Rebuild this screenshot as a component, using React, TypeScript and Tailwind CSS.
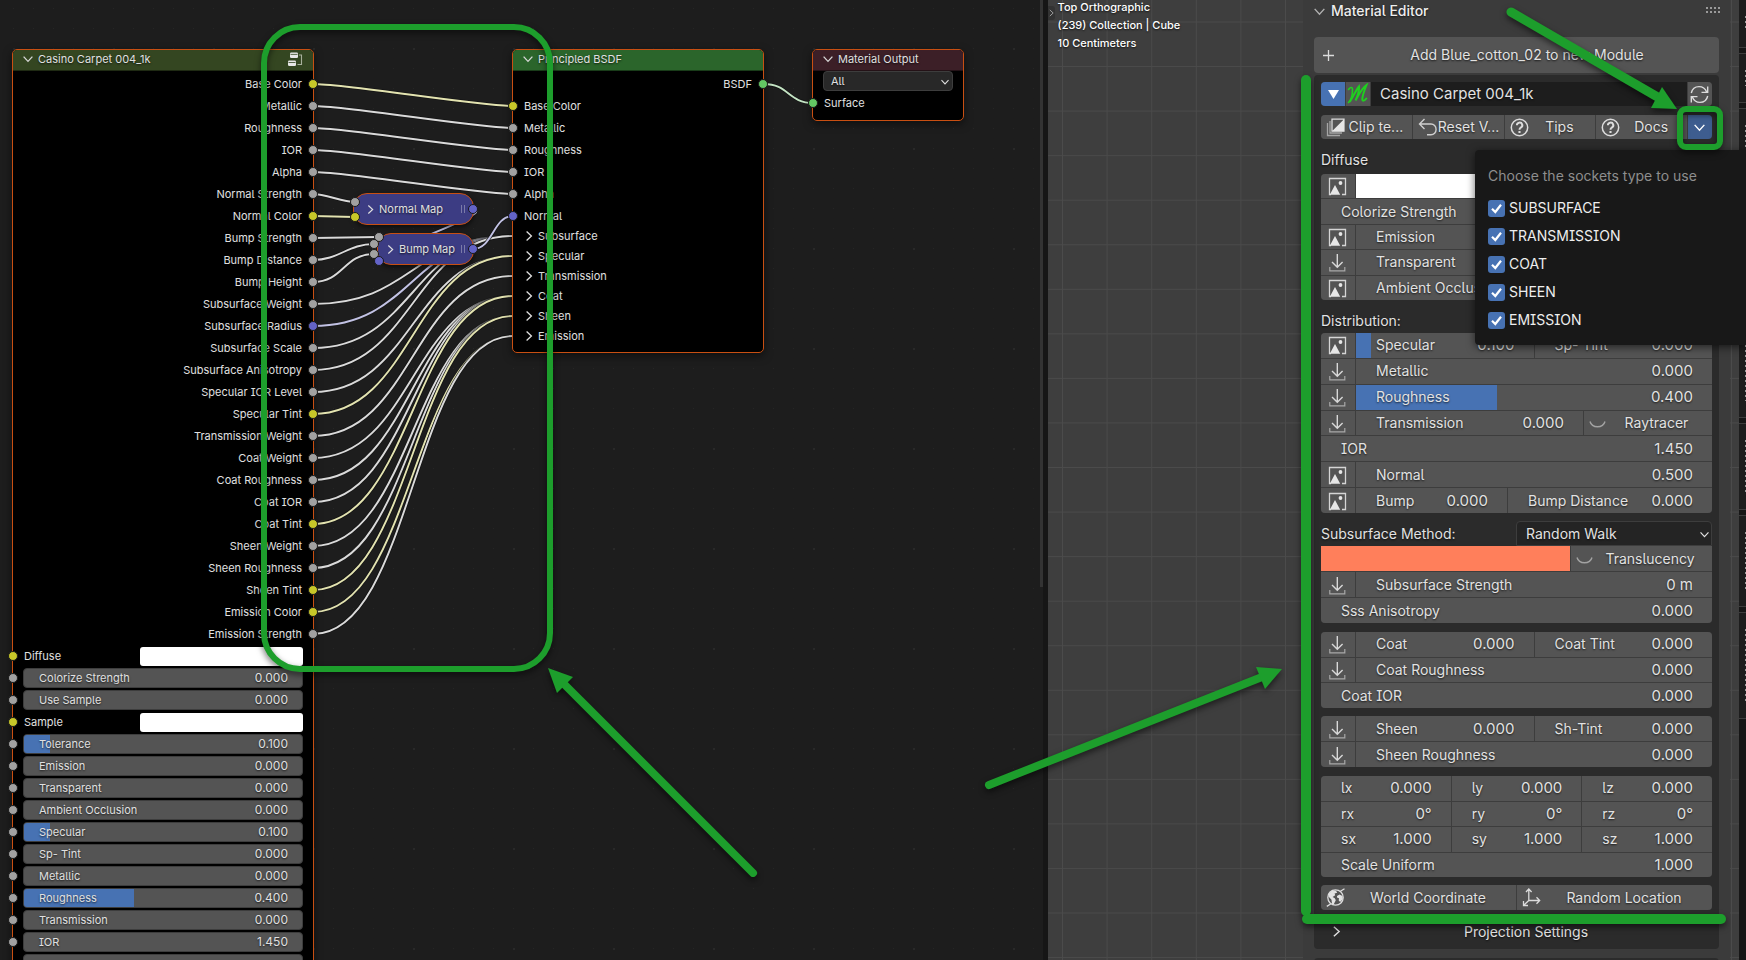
import React, { useId } from "react";

const SOCKET = {
  yellow: "bg-[#c7c729]",
  gray: "bg-[#a1a1a1]",
  blue: "bg-[#6363c7]",
  green: "bg-[#63c763]",
};
type SocketColor = keyof typeof SOCKET;

const LINK = { yellow: "#e3e3b0", gray: "#dadada", blue: "#c2c2e4", green: "#c4e4c4" };

const SHADOW = "[text-shadow:0_1px_2px_rgba(0,0,0,0.7)]";

/* ---------- data ---------- */

type Output = { name: string; color: SocketColor };

const outputs: Output[] = [
  { name: "Base Color", color: "yellow" },
  { name: "Metallic", color: "gray" },
  { name: "Roughness", color: "gray" },
  { name: "IOR", color: "gray" },
  { name: "Alpha", color: "gray" },
  { name: "Normal Strength", color: "gray" },
  { name: "Normal Color", color: "yellow" },
  { name: "Bump Strength", color: "gray" },
  { name: "Bump Distance", color: "gray" },
  { name: "Bump Height", color: "gray" },
  { name: "Subsurface Weight", color: "gray" },
  { name: "Subsurface Radius", color: "blue" },
  { name: "Subsurface Scale", color: "gray" },
  { name: "Subsurface Anisotropy", color: "gray" },
  { name: "Specular IOR Level", color: "gray" },
  { name: "Specular Tint", color: "yellow" },
  { name: "Transmission Weight", color: "gray" },
  { name: "Coat Weight", color: "gray" },
  { name: "Coat Roughness", color: "gray" },
  { name: "Coat IOR", color: "gray" },
  { name: "Coat Tint", color: "yellow" },
  { name: "Sheen Weight", color: "gray" },
  { name: "Sheen Roughness", color: "gray" },
  { name: "Sheen Tint", color: "yellow" },
  { name: "Emission Color", color: "yellow" },
  { name: "Emission Strength", color: "gray" },
];

type NodeInput = { name: string; value?: string; fill?: number; swatch?: boolean };

const inputs: NodeInput[] = [
  { name: "Diffuse", swatch: true },
  { name: "Colorize Strength", value: "0.000" },
  { name: "Use Sample", value: "0.000" },
  { name: "Sample", swatch: true },
  { name: "Tolerance", value: "0.100", fill: 9.5 },
  { name: "Emission", value: "0.000" },
  { name: "Transparent", value: "0.000" },
  { name: "Ambient Occlusion", value: "0.000" },
  { name: "Specular", value: "0.100", fill: 9.5 },
  { name: "Sp- Tint", value: "0.000" },
  { name: "Metallic", value: "0.000" },
  { name: "Roughness", value: "0.400", fill: 39.5 },
  { name: "Transmission", value: "0.000" },
  { name: "IOR", value: "1.450" },
];

const bsdfInputs: Output[] = [
  { name: "Base Color", color: "yellow" },
  { name: "Metallic", color: "gray" },
  { name: "Roughness", color: "gray" },
  { name: "IOR", color: "gray" },
  { name: "Alpha", color: "gray" },
  { name: "Normal", color: "blue" },
];
const bsdfPanels = ["Subsurface", "Specular", "Transmission", "Coat", "Sheen", "Emission"];

/* ---------- links ---------- */

const outY = (i: number) => 84 + i * 22;

function curve(x1: number, y1: number, x2: number, y2: number) {
  const dx = Math.abs(x2 - x1);
  const slope = Math.abs((y2 - y1) / (dx || 1));
  const h = 0.5 * dx * Math.min(1, slope * 3.25);
  return `M${x1},${y1} C${x1 + h},${y1} ${x2 - h},${y2} ${x2},${y2}`;
}

type Link = { d: string; color: SocketColor; fade?: boolean };

const panelOf = [236, 236, 236, 236, 256, 256, 276, 296, 296, 296, 296, 316, 316, 316, 336, 336];

const links: Link[] = [
  ...[0, 1, 2, 3, 4].map((i) => ({ d: curve(313, outY(i), 513, outY(i) + 22), color: outputs[i].color })),
  { d: curve(313, 194, 355, 202), color: "gray" as const },
  { d: curve(313, 216, 355, 217), color: "yellow" as const },
  { d: curve(313, 238, 379, 237), color: "gray" as const },
  { d: curve(313, 260, 374, 244), color: "gray" as const },
  { d: curve(313, 282, 374, 254), color: "gray" as const },
  { d: "M473,210 C500,212 352,261 379,261", color: "blue" as const },
  ...panelOf.map((y, k) => ({
    d: curve(313, outY(10 + k), 513, y),
    color: outputs[10 + k].color,
    fade: k < panelOf.length - 1 && panelOf[k + 1] === y,
  })),
  { d: curve(473, 249, 513, 216), color: "blue" as const },
  { d: curve(764, 84, 813, 103), color: "green" as const },
];

function Links() {
  return (
    <svg className="absolute left-0 top-0 h-full w-full" aria-hidden="true">
      <defs>
        {(Object.keys(LINK) as SocketColor[]).map((c) => (
          <linearGradient key={c} id={"fade-" + c} gradientUnits="userSpaceOnUse" x1="455" y1="0" x2="505" y2="0">
            <stop offset="0" stopColor={LINK[c]} />
            <stop offset="1" stopColor={LINK[c]} stopOpacity="0.15" />
          </linearGradient>
        ))}
      </defs>
      {links.map((l, i) => (
        <g key={i} fill="none">
          <path d={l.d} stroke="#111" strokeWidth="3.4" strokeOpacity={l.fade ? 0.4 : 0.8} />
          <path d={l.d} stroke={l.fade ? `url(#fade-${l.color})` : LINK[l.color]} strokeWidth="1.9" />
        </g>
      ))}
    </svg>
  );
}

/* ---------- small icons ---------- */

function Chevron({ dir = "down", size = 10, className = "" }: { dir?: "down" | "right"; size?: number; className?: string }) {
  return (
    <svg width={size} height={size} viewBox="0 0 10 10" fill="none" stroke="currentColor" strokeWidth="1.3" className={className} aria-hidden="true">
      <path d={dir === "down" ? "M0.6 2.6 5 7.4 9.4 2.6" : "M2.6 0.6 7.4 5 2.6 9.4"} />
    </svg>
  );
}

function ImageIcon() {
  return (
    <svg width="19" height="19" viewBox="0 0 19 19" fill="none" aria-hidden="true">
      <path d="M3 17.5H1.5V1.5h16v16H14" stroke="#d5d5d5" strokeWidth="1.3" />
      <path d="M1.8 17.8 7 8l5.200 9.800Z" fill="#e6e6e6" />
      <circle cx="12.500" cy="6" r="1.900" fill="#e6e6e6" />
    </svg>
  );
}

function DownloadIcon() {
  return (
    <svg width="19" height="19" viewBox="0 0 19 19" fill="none" aria-hidden="true">
      <path d="M1.800 14v3.800h15V14" stroke="#a8a8a8" strokeWidth="1.2" />
      <path d="M9.300 1v13M4 9l5.300 5.300L14.600 9" stroke="#d8d8d8" strokeWidth="1.400" />
    </svg>
  );
}

function EyeClosed() {
  return (
    <svg width="17" height="10" viewBox="0 0 17 10" fill="none" className="mt-1 shrink-0" aria-hidden="true">
      <path d="M1 1.500C3 8.500 14 8.500 16 1.500" stroke="#a3a3a3" strokeWidth="1.400" />
    </svg>
  );
}

function ClipIcon() {
  return (
    <svg width="19" height="19" viewBox="0 0 19 19" fill="none" className="shrink-0" aria-hidden="true">
      <path d="M1.500 5v12.500H14M4 3v12h12" stroke="#a5a5a5" strokeWidth="1.300" />
      <path d="M6 1.200h12v12H6z" stroke="#dcdcdc" strokeWidth="1.300" />
      <path d="M18 1.200v12H6Z" fill="#e6e6e6" />
    </svg>
  );
}

function UndoIcon() {
  return (
    <svg width="20" height="19" viewBox="0 0 20 19" fill="none" stroke="#cfcfcf" strokeWidth="1.400" className="shrink-0" aria-hidden="true">
      <path d="M6.500 1 1.500 6l5 5M1.500 6H13a5 5.300 0 0 1 0 10.800H9" />
    </svg>
  );
}

function HelpIcon() {
  return (
    <svg width="19" height="19" viewBox="0 0 19 19" fill="none" stroke="#dcdcdc" className="shrink-0" aria-hidden="true">
      <circle cx="9.500" cy="9.500" r="8.200" strokeWidth="1.500" />
      <path d="M6.900 7.300a2.700 2.600 0 1 1 4 2.200c-1 .6-1.400 1-1.400 2.200" strokeWidth="2" />
      <path d="M9.500 13v2" strokeWidth="2.100" />
    </svg>
  );
}

function RefreshIcon() {
  return (
    <svg width="19" height="19" viewBox="0 0 19 19" fill="none" stroke="#dcdcdc" strokeWidth="1.400" aria-hidden="true">
      <path d="M1.300 8C2.300 3.500 5.500 1.600 9 1.600c4 0 6.300 2 7.700 5.400M17.700 1.500V7.400H11.500" />
      <path d="M17.700 11c-1 4.500-4.200 6.400-7.700 6.400-4 0-6.300-2-7.700-5.400M1.300 17.500v-5.900h6.200" />
    </svg>
  );
}

function WorldIcon() {
  return (
    <svg width="19" height="19" viewBox="0 0 19 19" fill="none" className="shrink-0" aria-hidden="true">
      <circle cx="9.500" cy="9.500" r="7.700" stroke="#dcdcdc" strokeWidth="1.300" />
      <path d="M2.500 6 6 2.500l4 .3 1.200 2-2.600.8.600 1.600L6.600 9l2.200 1.200 1 2-2.300 4.500-1.500-1-.5-4L2.500 8.500ZM11 8l2.500-1.500 3 1.500.3 3-2.600 3-1.500-1.500.3-2.300L11 9.500Z" fill="#e2e2e2" />
      <path d="M14 3.500 18.500.8M5 15.800.8 18.400" stroke="#dcdcdc" strokeWidth="1.300" />
    </svg>
  );
}

function AxesIcon() {
  return (
    <svg width="19" height="19" viewBox="0 0 19 19" fill="none" stroke="#dcdcdc" strokeWidth="1.300" className="shrink-0" aria-hidden="true">
      <path d="M6.800 1v11.500H17.500M6.800 12.500 2 17M4 4l2.800-3L9.600 4M14.500 9.200l3.200 3.300-3.200 3.300M1.500 13v4.500H6" />
    </svg>
  );
}

/* ---------- node editor ---------- */

function Socket({ color, side }: { color: SocketColor; side: "left" | "right" }) {
  return (
    <span
      className={`absolute top-1/2 size-[10px] -translate-y-1/2 rounded-full border border-[#1a1a1a] ${
        side === "left" ? "-left-[5px]" : "-right-[5px]"
      } ${SOCKET[color]}`}
    />
  );
}

function NodeHeader({ title, className, children }: { title: string; className: string; children?: React.ReactNode }) {
  return (
    <header className={`flex h-[21px] items-center gap-[5px] rounded-t-[4px] border-b border-black/40 px-[10px] pb-[2px] ${className}`}>
      <Chevron className="shrink-0 text-[#d8d8d8]" />
      <h2 className="flex-1 whitespace-nowrap">{title}</h2>
      {children}
    </header>
  );
}

const FIELD_BAR = "h-5 w-full overflow-hidden rounded-[4px] border border-[#3d3d3d] bg-[#545454]";

function NodeField({ input }: { input: NodeInput }) {
  const id = useId();
  const color: SocketColor = input.swatch ? "yellow" : "gray";
  if (input.swatch) {
    return (
      <li className="relative flex h-[22px] items-center justify-between pl-[11px] pr-[10px]">
        <Socket color={color} side="left" />
        <label htmlFor={id}>{input.name}</label>
        <button id={id} type="button" aria-label={input.name} className="h-[19px] w-[163px] rounded-[3px] bg-white" />
      </li>
    );
  }
  return (
    <li className="relative flex h-[22px] items-center px-[10px]">
      <Socket color={color} side="left" />
      <label className={`relative flex items-center pl-[15px] pr-[14px] ${FIELD_BAR}`}>
        {input.fill ? <span className="absolute inset-y-0 left-0 bg-[#4772b3]" style={{ width: input.fill + "%" }} /> : null}
        <span className="relative whitespace-nowrap">{input.name}</span>
        <input
          type="text"
          defaultValue={input.value}
          className={`relative w-0 min-w-0 flex-1 bg-transparent text-right text-[12px] outline-none ${SHADOW}`}
        />
      </label>
    </li>
  );
}

function CollapsedNode({ title }: { title: string }) {
  return (
    <div className="flex h-8 items-center gap-1 rounded-[14px] border border-[#c84f12] bg-[#3c3c83] pl-[12px] pr-[8px] shadow-[0_2px_5px_rgba(0,0,0,0.6)]">
      <Chevron dir="right" size={9} className="text-[#e0e0e0]" />
      <span className="flex-1 whitespace-nowrap">{title}</span>
      <span className="h-2 w-[4px] border-x border-[#7a7aa8]" />
    </div>
  );
}

function Dot({ color }: { color: SocketColor }) {
  return <span className={`block size-[10px] rounded-full border border-[#1a1a1a] ${SOCKET[color]}`} />;
}

const NODE = "absolute rounded-[5px] border border-[#c84f12] bg-black shadow-[0_3px_8px_rgba(0,0,0,0.5)]";

function NodeEditor() {
  return (
    <section className={`relative w-[60%] shrink-0 overflow-hidden border-r-[5px] border-[#161616] bg-[#1d1d1d] text-[11px] leading-4 text-[#e0e0e0] ${SHADOW}`}>
      <svg className="absolute inset-0 h-full w-full" aria-hidden="true">
        <defs>
          <pattern id="dots" x="3" y="-1" width="20" height="20" patternUnits="userSpaceOnUse">
            <rect x="10" y="9" width="1" height="1" fill="#262626" />
          </pattern>
          <pattern id="dots-major" x="3" y="-1" width="100" height="100" patternUnits="userSpaceOnUse">
            <rect x="10" y="49" width="2" height="2" fill="#292929" />
          </pattern>
        </defs>
        <rect width="100%" height="100%" fill="url(#dots)" />
        <rect width="100%" height="100%" fill="url(#dots-major)" />
      </svg>
      <Links />

      <div className={`${NODE} left-[12px] top-[49px] w-[302px]`}>
        <NodeHeader title="Casino Carpet 004_1k" className="bg-[#344621]">
          <svg width="15" height="15" viewBox="0 0 15 15" fill="none" aria-hidden="true">
            <rect x="2" y="0.500" width="8" height="5.500" rx="1.200" fill="#e6e6e6" />
            <rect x="0" y="8.500" width="8" height="5.500" rx="1.200" fill="#e6e6e6" />
            <path d="M2.500 2.400h7M.5 10.500h7" stroke="#344621" strokeWidth="0.800" />
            <path d="M11 3h2.500v9.500H9.500" stroke="#a8b09c" strokeWidth="1.100" />
          </svg>
        </NodeHeader>
        <ul className="pt-[2px]">
          {outputs.map((o) => (
            <li key={o.name} className="relative flex h-[22px] items-center justify-end px-[11px]">
              {o.name}
              <Socket color={o.color} side="right" />
            </li>
          ))}
        </ul>
        <ul>
          {inputs.map((input) => (
            <NodeField key={input.name} input={input} />
          ))}
        </ul>
        <div className="px-[10px] pt-[1px]">
          <div className={FIELD_BAR} />
        </div>
      </div>

      <div className={`${NODE} left-[512px] top-[49px] w-[252px] pb-[6px]`}>
        <NodeHeader title="Principled BSDF" className="bg-[#2b652b]" />
        <ul className="pt-[2px]">
          <li className="relative flex h-[22px] items-center justify-end px-[11px]">
            BSDF
            <Socket color="green" side="right" />
          </li>
          {bsdfInputs.map((o) => (
            <li key={o.name} className="relative flex h-[22px] items-center px-[11px]">
              {o.name}
              <Socket color={o.color} side="left" />
            </li>
          ))}
        </ul>
        <ul className="-mt-px">
          {bsdfPanels.map((p) => (
            <li key={p} className="flex h-5 items-center">
              <button type="button" className={`flex items-center gap-1 pl-[11px] ${SHADOW}`}>
                <Chevron dir="right" />
                {p}
              </button>
            </li>
          ))}
        </ul>
      </div>

      <div className={`${NODE} left-[812px] top-[49px] w-[152px] pb-[6px]`}>
        <NodeHeader title="Material Output" className="bg-[#3c1f27]" />
        <div className="relative px-[10px]">
          <select aria-label="Target" defaultValue="All" className={`block h-5 w-full appearance-none rounded-[4px] border border-[#3d3d3d] bg-[#282828] px-[7px] ${SHADOW}`}>
            <option>All</option>
          </select>
          <Chevron size={8} className="pointer-events-none absolute right-[14px] top-[7px]" />
        </div>
        <div className="relative mt-[1px] flex h-[22px] items-center px-[11px]">
          Surface
          <Socket color="green" side="left" />
        </div>
      </div>

      <div className="absolute left-[353px] top-[193px] w-[121px]">
        <CollapsedNode title="Normal Map" />
        <div className="absolute -left-[3px] top-[4px] flex flex-col gap-[5px]">
          <Dot color="gray" />
          <Dot color="yellow" />
        </div>
        <div className="absolute -right-[4px] top-[11px]">
          <Dot color="blue" />
        </div>
      </div>

      <div className="absolute left-[377px] top-[233px] w-[97px]">
        <div className="[&>div]:pl-[8px]">
          <CollapsedNode title="Bump Map" />
        </div>
        <span className="absolute -left-[3px] -top-[1px]"><Dot color="gray" /></span>
        <span className="absolute -left-[8px] top-[6px]"><Dot color="gray" /></span>
        <span className="absolute -left-[8px] top-[16px]"><Dot color="gray" /></span>
        <span className="absolute -left-[3px] top-[23px]"><Dot color="blue" /></span>
        <div className="absolute -right-[4px] top-[11px]">
          <Dot color="blue" />
        </div>
      </div>

      <div className="absolute right-0 top-0 h-[587px] w-[3px] bg-[#333333]" />
    </section>
  );
}

/* ---------- sidebar ---------- */

const CELL = "bg-[#545454]";

function Group({ className, children }: { className: string; children: React.ReactNode }) {
  return <div className={`flex flex-col gap-px overflow-hidden rounded-[4px] bg-[#3d3d3d] ${className}`}>{children}</div>;
}

function Row({ children }: { children: React.ReactNode }) {
  return <div className="flex min-h-0 flex-1 gap-px">{children}</div>;
}

function IconCell({ kind, label }: { kind: "image" | "download"; label: string }) {
  return (
    <button type="button" aria-label={label} className={`flex w-[34px] shrink-0 items-center justify-center pr-[2px] pt-[1px] ${CELL}`}>
      {kind === "image" ? <ImageIcon /> : <DownloadIcon />}
    </button>
  );
}

function Field({ name, value, fill, className = "flex-1" }: { name: string; value: string; fill?: number; className?: string }) {
  return (
    <label className={`relative flex min-w-0 items-center pl-5 pr-[19px] ${CELL} ${className}`}>
      {fill ? <span className="absolute inset-y-0 left-0 bg-[#4772b3]" style={{ width: fill + "%" }} /> : null}
      <span className="relative whitespace-nowrap">{name}</span>
      <input type="text" defaultValue={value} className={`relative w-0 min-w-0 flex-1 bg-transparent text-right text-[15px] outline-none ${SHADOW}`} />
    </label>
  );
}

function ToolButton({ icon, children, className = "" }: { icon: React.ReactNode; children: React.ReactNode; className?: string }) {
  return (
    <button type="button" className={`flex min-w-0 flex-1 items-center px-[5px] ${CELL} ${SHADOW} ${className}`}>
      {icon}
      <span className="flex-1 whitespace-nowrap text-center">{children}</span>
    </button>
  );
}

function SocketsPopover() {
  return (
    <fieldset className="absolute left-[172px] right-0 top-[150px] h-[195px] rounded-l-[4px] bg-[#181818] pl-[13px] pt-[14px] shadow-[0_2px_8px_rgba(0,0,0,0.6)]">
      <legend className="float-left flex h-6 w-full items-center text-[#8e8e8e]">Choose the sockets type to use</legend>
      <div className="flex w-full flex-col pt-[6px]">
        {["SUBSURFACE", "TRANSMISSION", "COAT", "SHEEN", "EMISSION"].map((s) => (
          <label key={s} className="flex h-7 items-center gap-1 text-[#eeeeee]">
            <span className="relative flex size-[17px]">
              <input type="checkbox" defaultChecked className="size-[17px] appearance-none rounded-[3px] bg-[#4772b3]" />
              <svg className="pointer-events-none absolute inset-0" width="17" height="17" viewBox="0 0 17 17" fill="none" aria-hidden="true">
                <path d="M4 8.800 7.300 12 13 4.800" stroke="#fff" strokeWidth="2.200" />
              </svg>
            </span>
            {s}
          </label>
        ))}
      </div>
    </fieldset>
  );
}

function Sidebar() {
  return (
    <aside className={`w-[427px] shrink-0 bg-[#3b3b3b] px-[11px] ${SHADOW}`}>
      <header className="flex h-[22px] items-center gap-[6px]">
        <Chevron size={11} className="text-[#b0b0b0]" />
        <h2 className="flex-1 font-medium text-[#eeeeee]">Material Editor</h2>
        <svg width="16" height="8" viewBox="0 0 16 8" fill="#9a9a9a" className="-mr-[2px]" aria-hidden="true">
          {[0, 4, 8, 12].map((x) => (
            <g key={x}>
              <rect x={x + 1} y="0" width="2" height="2" />
              <rect x={x + 1} y="4" width="2" height="2" />
            </g>
          ))}
        </svg>
      </header>

      <button type="button" className={`mt-[15px] flex h-9 w-full items-center rounded-[4px] px-2 ${CELL} ${SHADOW}`}>
        <svg width="13" height="13" viewBox="0 0 13 13" stroke="#dcdcdc" strokeWidth="1.300" aria-hidden="true">
          <path d="M6.500 1v11M1 6.500h11" />
        </svg>
        <span className="flex-1 pl-2 text-center">Add Blue_cotton_02 to new Module</span>
      </button>

      <div className="mt-[2px] rounded-[4px] bg-[#2b2b2b] px-[7px] pt-[7px]">
        <div className="flex h-6 gap-px overflow-hidden rounded-[4px] bg-[#3d3d3d]">
          <button type="button" aria-label="Expand" className="flex w-6 items-center justify-center bg-[#4772b3]">
            <svg width="11" height="9" viewBox="0 0 11 9" fill="#fff" aria-hidden="true"><path d="M0 0h11L5.500 9Z" /></svg>
          </button>
          <button type="button" aria-label="Module" className={`flex w-6 items-center justify-center ${CELL}`}>
            <svg width="22" height="22" viewBox="0 0 22 22" fill="none" stroke="#1fd01f" strokeLinecap="round" aria-hidden="true">
              <path d="M1.500 6.500C3 4 5.500 3.500 5.500 6.500c0 4-1 10-4 13" strokeWidth="1.600" />
              <path d="M3 18.500C6 14 9 7 12 3.500 12.500 8 10.500 13 8.500 17.500 11.500 12 15 5 19.500 2 17.500 7 15.500 12 15.300 16c0 2.500 2.200 2 4-.5" strokeWidth="2" />
            </svg>
          </button>
          <input type="text" aria-label="Material name" defaultValue="Casino Carpet 004_1k" className={`min-w-0 flex-1 bg-[#1d1d1d] px-[9px] text-[15px] outline-none ${SHADOW}`} />
          <button type="button" aria-label="Refresh" className={`flex w-6 items-center justify-center pr-px ${CELL}`}>
            <RefreshIcon />
          </button>
        </div>

        <div className="mt-[9px] flex h-6 gap-px overflow-hidden rounded-[4px] bg-[#3d3d3d]">
          <ToolButton icon={<ClipIcon />}>Clip te...</ToolButton>
          <ToolButton icon={<UndoIcon />}>Reset V...</ToolButton>
          <ToolButton icon={<HelpIcon />}>Tips</ToolButton>
          <ToolButton icon={<HelpIcon />}>Docs</ToolButton>
          <button type="button" aria-label="Socket types" className="flex w-6 items-center justify-center bg-[#3e5d8f] pr-px">
            <Chevron size={11} className="text-white" />
          </button>
        </div>

        <h3 className="mt-[9px] flex h-6 items-center">Diffuse</h3>
        <Group className="mt-[2px] h-[126px]">
          <Row>
            <IconCell kind="image" label="Diffuse image" />
            <button type="button" aria-label="Diffuse color" className="flex-1 bg-white" />
          </Row>
          <Row><Field name="Colorize Strength" value="0.000" /></Row>
          <Row><IconCell kind="image" label="Emission image" /><Field name="Emission" value="0.000" /></Row>
          <Row><IconCell kind="download" label="Transparent image" /><Field name="Transparent" value="0.000" /></Row>
          <Row><IconCell kind="image" label="Ambient occlusion image" /><Field name="Ambient Occlusion" value="0.000" /></Row>
        </Group>

        <h3 className="mt-[9px] flex h-6 items-center">Distribution:</h3>
        <Group className="h-[180px]">
          <Row>
            <IconCell kind="image" label="Specular image" />
            <Field name="Specular" value="0.100" fill={8.5} />
            <Field name="Sp- Tint" value="0.000" />
          </Row>
          <Row><IconCell kind="download" label="Metallic image" /><Field name="Metallic" value="0.000" /></Row>
          <Row><IconCell kind="download" label="Roughness image" /><Field name="Roughness" value="0.400" fill={39.5} /></Row>
          <Row>
            <IconCell kind="download" label="Transmission image" />
            <Field name="Transmission" value="0.000" />
            <ToolButton icon={<EyeClosed />} className="max-w-[128px]">Raytracer</ToolButton>
          </Row>
          <Row><Field name="IOR" value="1.450" /></Row>
          <Row><IconCell kind="image" label="Normal image" /><Field name="Normal" value="0.500" /></Row>
          <Row>
            <IconCell kind="image" label="Bump image" />
            <Field name="Bump" value="0.000" />
            <Field name="Bump Distance" value="0.000" className="w-[204px]" />
          </Row>
        </Group>

        <div className="mt-2 flex h-[102px] flex-col">
          <div className="flex h-[25px] items-center justify-between">
            <label htmlFor="sss-method">Subsurface Method:</label>
            <div className="relative w-[196px]">
              <select id="sss-method" defaultValue="Random Walk" className={`block h-[25px] w-full appearance-none rounded-t-[4px] border border-[#3d3d3d] bg-[#242424] px-[9px] ${SHADOW}`}>
                <option>Random Walk</option>
              </select>
              <Chevron size={9} className="pointer-events-none absolute right-[3px] top-[9px]" />
            </div>
          </div>
          <div className="flex min-h-0 flex-1 flex-col gap-px overflow-hidden rounded-b-[4px] bg-[#3d3d3d]">
            <Row>
              <button type="button" aria-label="Subsurface color" className="flex-1 bg-[#ff7f5b]" />
              <ToolButton icon={<EyeClosed />} className="max-w-[141px]">Translucency</ToolButton>
            </Row>
            <Row><IconCell kind="download" label="Subsurface image" /><Field name="Subsurface Strength" value="0 m" /></Row>
            <Row><Field name="Sss Anisotropy" value="0.000" /></Row>
          </div>
        </div>

        <Group className="mt-[9px] h-[76px]">
          <Row>
            <IconCell kind="download" label="Coat image" />
            <Field name="Coat" value="0.000" />
            <Field name="Coat Tint" value="0.000" />
          </Row>
          <Row><IconCell kind="download" label="Coat roughness image" /><Field name="Coat Roughness" value="0.000" /></Row>
          <Row><Field name="Coat IOR" value="0.000" /></Row>
        </Group>

        <Group className="mt-2 h-[51px]">
          <Row>
            <IconCell kind="download" label="Sheen image" />
            <Field name="Sheen" value="0.000" />
            <Field name="Sh-Tint" value="0.000" />
          </Row>
          <Row><IconCell kind="download" label="Sheen roughness image" /><Field name="Sheen Roughness" value="0.000" /></Row>
        </Group>

        <Group className="mt-[9px] h-[101px]">
          <Row><Field name="lx" value="0.000" /><Field name="ly" value="0.000" /><Field name="lz" value="0.000" /></Row>
          <Row><Field name="rx" value="0°" /><Field name="ry" value="0°" /><Field name="rz" value="0°" /></Row>
          <Row><Field name="sx" value="1.000" /><Field name="sy" value="1.000" /><Field name="sz" value="1.000" /></Row>
          <Row><Field name="Scale Uniform" value="1.000" /></Row>
        </Group>

        <div className="mt-2 flex h-[25px] gap-px overflow-hidden rounded-[4px] bg-[#3d3d3d]">
          <ToolButton icon={<WorldIcon />}>World Coordinate</ToolButton>
          <ToolButton icon={<AxesIcon />}>Random Location</ToolButton>
        </div>

        <button type="button" className={`mt-1 flex h-[35px] w-full items-center px-[10px] ${SHADOW}`}>
          <Chevron dir="right" size={11} />
          <span className="flex-1 pl-2 text-center">Projection Settings</span>
        </button>
      </div>
      <div className="mt-[9px] h-6 rounded-t-[4px] bg-[#2b2b2b]" />
    </aside>
  );
}

function TabStrip() {
  return (
    <nav aria-label="Sidebar tabs" className="flex w-[7px] shrink-0 flex-col bg-[#161616]">
      {["h-[48px]", "h-[50px]", "h-[310px]", "h-[87px]", "h-[92px]", "h-[107px]"].map((h, i) => (
        <div key={i} className={`flex shrink-0 justify-end border-b border-[#3d3d3d] bg-[#1d1d1d] py-4 ${i ? "mt-[5px] border-t" : ""} ${h}`}>
          <span className="w-px bg-[repeating-linear-gradient(180deg,#9a9a9a_0_2px,#1d1d1d_2px_5px)]" />
        </div>
      ))}
    </nav>
  );
}

function Viewport() {
  return (
    <section className="relative flex min-w-0 flex-1 overflow-hidden bg-[#3e3e3e]">
      <svg className="absolute inset-0 h-full w-full" stroke="#4b4b4b" aria-hidden="true">
        {Array.from({ length: 22 }, (_, i) => {
          const y = 22 + i * 44.55;
          return <line key={"h" + i} x1="0" x2="100%" y1={y} y2={y} strokeWidth="1" />;
        })}
        {Array.from({ length: 16 }, (_, i) => {
          const x = 14.5 + i * 44.6;
          return <line key={"v" + i} y1="0" y2="100%" x1={x} x2={x} strokeWidth="1" />;
        })}
      </svg>
      <div className={`relative flex min-w-0 flex-1 items-start text-[11px] font-medium leading-[18px] text-white ${SHADOW}`}>
        <button type="button" aria-label="Toggle toolbar" className="mt-[6px] flex h-[14px] w-[7px] items-center rounded-r-[3px] bg-[#333333]">
          <Chevron dir="right" size={8} className="text-[#a8a8a8]" />
        </button>
        <div className="-mt-[2px] whitespace-nowrap pl-[3px]">
          <p>Top Orthographic</p>
          <p>(239) Collection | Cube</p>
          <p>10 Centimeters</p>
        </div>
      </div>
      <div className="relative flex shrink-0 text-[14px] leading-5 text-[#e2e2e2]">
        <Sidebar />
        <div className="w-[9px] shrink-0" />
        <TabStrip />
        <SocketsPopover />
        <svg className="pointer-events-none absolute left-0 top-0 h-full w-full overflow-visible drop-shadow-[0_3px_3px_rgba(0,0,0,0.55)]" fill="none" stroke="#1d9e2c" aria-hidden="true">
          <path d="M3 80V911" strokeWidth="10" strokeLinecap="round" />
          <path d="M4 919H418" strokeWidth="10" strokeLinecap="round" />
          <rect x="377" y="109" width="40" height="38" rx="6" strokeWidth="6" />
          <path d="M208 12 358 99" strokeWidth="9" strokeLinecap="round" />
          <path d="M374 109 359 87 348 108Z" fill="#1d9e2c" stroke="none" />
        </svg>
      </div>
    </section>
  );
}

export default function App() {
  return (
    <main className="relative flex h-screen overflow-hidden bg-[#1d1d1d] font-['Inter',sans-serif] [font-feature-settings:'cv05','cv08']">
      <NodeEditor />
      <Viewport />
      <svg className="pointer-events-none absolute inset-0 h-full w-full drop-shadow-[0_3px_3px_rgba(0,0,0,0.55)]" fill="none" stroke="#1d9e2c" aria-hidden="true">
        <rect x="264" y="27" width="286" height="642" rx="36" strokeWidth="6" />
        <path d="M753 873 562 682" strokeWidth="8" strokeLinecap="round" />
        <path d="M548 668 573 677 557 693Z" fill="#1d9e2c" stroke="none" />
        <path d="M989 785 1262 677" strokeWidth="8" strokeLinecap="round" />
        <path d="M1282 669 1256 667 1265 689Z" fill="#1d9e2c" stroke="none" />
      </svg>
    </main>
  );
}
